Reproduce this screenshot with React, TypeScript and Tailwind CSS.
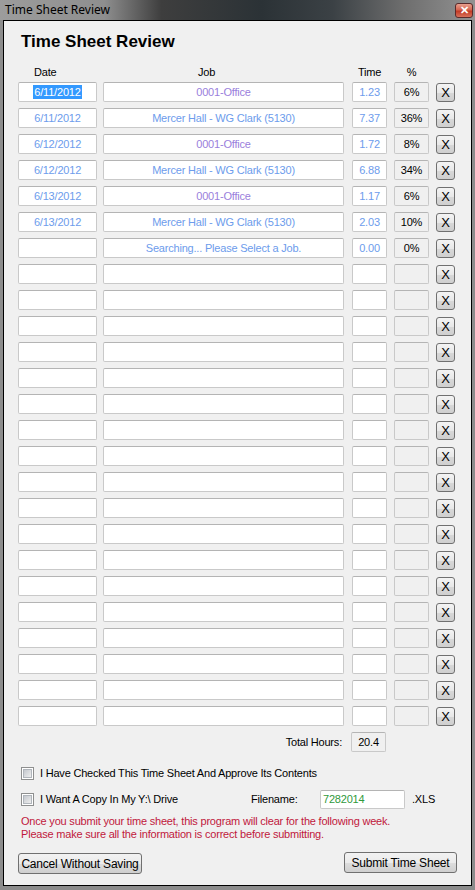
import React from "react"

type Row = { date: string; job: string; time: string; pct: string; selected?: boolean }

const filled: Row[] = [
  { date: "6/11/2012", job: "0001-Office", time: "1.23", pct: "6%", selected: true },
  { date: "6/11/2012", job: "Mercer Hall - WG Clark (5130)", time: "7.37", pct: "36%" },
  { date: "6/12/2012", job: "0001-Office", time: "1.72", pct: "8%" },
  { date: "6/12/2012", job: "Mercer Hall - WG Clark (5130)", time: "6.88", pct: "34%" },
  { date: "6/13/2012", job: "0001-Office", time: "1.17", pct: "6%" },
  { date: "6/13/2012", job: "Mercer Hall - WG Clark (5130)", time: "2.03", pct: "10%" },
  { date: "", job: "Searching... Please Select a Job.", time: "0.00", pct: "0%" },
]

const rows: Row[] = [
  ...filled,
  ...Array.from({ length: 25 - filled.length }, () => ({ date: "", job: "", time: "", pct: "" })),
]

const box = "h-[20px] shrink-0 border border-[#c9c9c9] border-t-[#b4b4b4] rounded-[2px] flex items-center justify-center"

function XButton() {
  return (
    <div className="w-[19px] h-[19px] mt-[1px] ml-[7px] shrink-0 rounded-[3px] border border-[#707070] bg-[linear-gradient(#f4f4f4_0%,#e8e8e8_50%,#d8d8d8_51%,#cfcfcf_100%)] flex items-center justify-center text-[13px] leading-none text-black">
      X
    </div>
  )
}

function Checkbox() {
  return (
    <div className="w-[13px] h-[13px] shrink-0 border border-[#8e8f8f] bg-white p-[1px]">
      <div className="w-full h-full bg-[linear-gradient(135deg,#c4c8ce,#eeeeee)] border border-[#b0b5bb]" />
    </div>
  )
}

function Button({ label, w }: { label: string; w: string }) {
  return (
    <div
      className={`${w} h-[21px] rounded-[3px] border border-[#707070] bg-[linear-gradient(#f2f2f2_0%,#ebebeb_50%,#dddddd_51%,#cfcfcf_100%)] flex items-center justify-center text-[12px] tracking-[-0.2px] text-black`}
    >
      {label}
    </div>
  )
}

export default function App() {
  return (
    <div
      className="w-[475px] h-[890px] bg-[#8c8c8c] flex flex-col"
      style={{ fontFamily: '"Liberation Sans", Arial, sans-serif' }}
    >
      {/* title bar */}
      <div className="h-[20px] flex items-center justify-between bg-[linear-gradient(90deg,#9c9c9c_0%,#8e8e8e_22%,#3e3e3e_34%,#2b3236_55%,#3b4145_70%,#6e6e6e_85%,#929292_100%)]">
        <span className="pl-[5px] text-[12px] text-black" style={{ fontFamily: '"Noto Sans", sans-serif' }}>
          Time Sheet Review
        </span>
        <div className="mr-[2px] w-[18px] h-[15px] rounded-[3px] border border-[#5a2a2a] bg-[linear-gradient(#e8a08e_0%,#d4634f_45%,#c23a24_55%,#d8705a_100%)] flex items-center justify-center text-white text-[11px] font-bold leading-none">
          ✕
        </div>
      </div>

      {/* client area */}
      <div className="mx-[3px] h-[866px] border border-black bg-[#f0f0f0] flex flex-col pl-[14px] text-[11px] tracking-[-0.2px]">
        <div className="mt-[11px] ml-[3px] h-[20px] text-[17px] tracking-normal font-bold leading-[20px] text-black">
          Time Sheet Review
        </div>

        <div className="mt-[13px] h-[14px] flex leading-[14px] text-black">
          <div className="w-[79px] pl-[16px]">Date</div>
          <div className="w-[241px] ml-[6px] pl-[95px]">Job</div>
          <div className="w-[35px] ml-[8px] text-center">Time</div>
          <div className="w-[35px] ml-[7px] text-center">%</div>
        </div>

        <div className="mt-[3px] flex flex-col gap-[6px]">
          {rows.map((r, i) => (
            <div key={i} className="flex h-[20px]">
              <div className={`${box} w-[79px] bg-white ${r.selected ? "border-[#7aa6d6] border-t-[#5c8fc7]" : ""}`}>
                {r.date &&
                  (r.selected ? (
                    <span className="bg-[#3399ff] text-white px-[1px] leading-[14px]">{r.date}</span>
                  ) : (
                    <span className="text-[#6d9cec]">{r.date}</span>
                  ))}
              </div>
              <div
                className={`${box} w-[241px] ml-[6px] bg-white ${r.job === "0001-Office" ? "text-[#9a80dc]" : "text-[#6d9cec]"}`}
              >
                {r.job}
              </div>
              <div className={`${box} w-[35px] ml-[8px] bg-white text-[#6d9cec]`}>{r.time}</div>
              <div className={`${box} w-[35px] ml-[7px] bg-[#f0f0f0] text-black`}>{r.pct}</div>
              <XButton />
            </div>
          ))}
        </div>

        <div className="mt-[6px] flex items-center h-[20px]">
          <div className="w-[326px] pr-[2px] text-right text-black">Total Hours:</div>
          <div className={`${box} w-[35px] ml-[7px] bg-[#f0f0f0] text-black`}>20.4</div>
        </div>

        <div className="mt-[14px] ml-[3px] flex items-center gap-[6px] h-[14px]">
          <Checkbox />
          <span className="text-black">I Have Checked This Time Sheet And Approve Its Contents</span>
        </div>

        <div className="mt-[9px] ml-[3px] flex items-center h-[20px]">
          <Checkbox />
          <span className="ml-[6px] w-[211px] shrink-0 text-black">I Want A Copy In My Y:\ Drive</span>
          <span className="w-[69px] shrink-0 text-black">Filename:</span>
          <div className="w-[85px] h-[19px] shrink-0 border border-[#c9c9c9] border-t-[#b4b4b4] rounded-[2px] bg-white flex items-center pl-[2px] text-[#2f9a3c]">
            7282014
          </div>
          <span className="ml-[7px] text-black">.XLS</span>
        </div>

        <div className="mt-[6px] ml-[3px] text-[#c0183c] leading-[13px]">
          <div>Once you submit your time sheet, this program will clear for the following week.</div>
          <div>Please make sure all the information is correct before submitting.</div>
        </div>

        <div className="mt-[11px] flex items-start pr-[14px]">
          <div className="mt-[1px]">
            <Button label="Cancel Without Saving" w="w-[124px]" />
          </div>
          <div className="ml-auto">
            <Button label="Submit Time Sheet" w="w-[113px]" />
          </div>
        </div>
      </div>
    </div>
  )
}
